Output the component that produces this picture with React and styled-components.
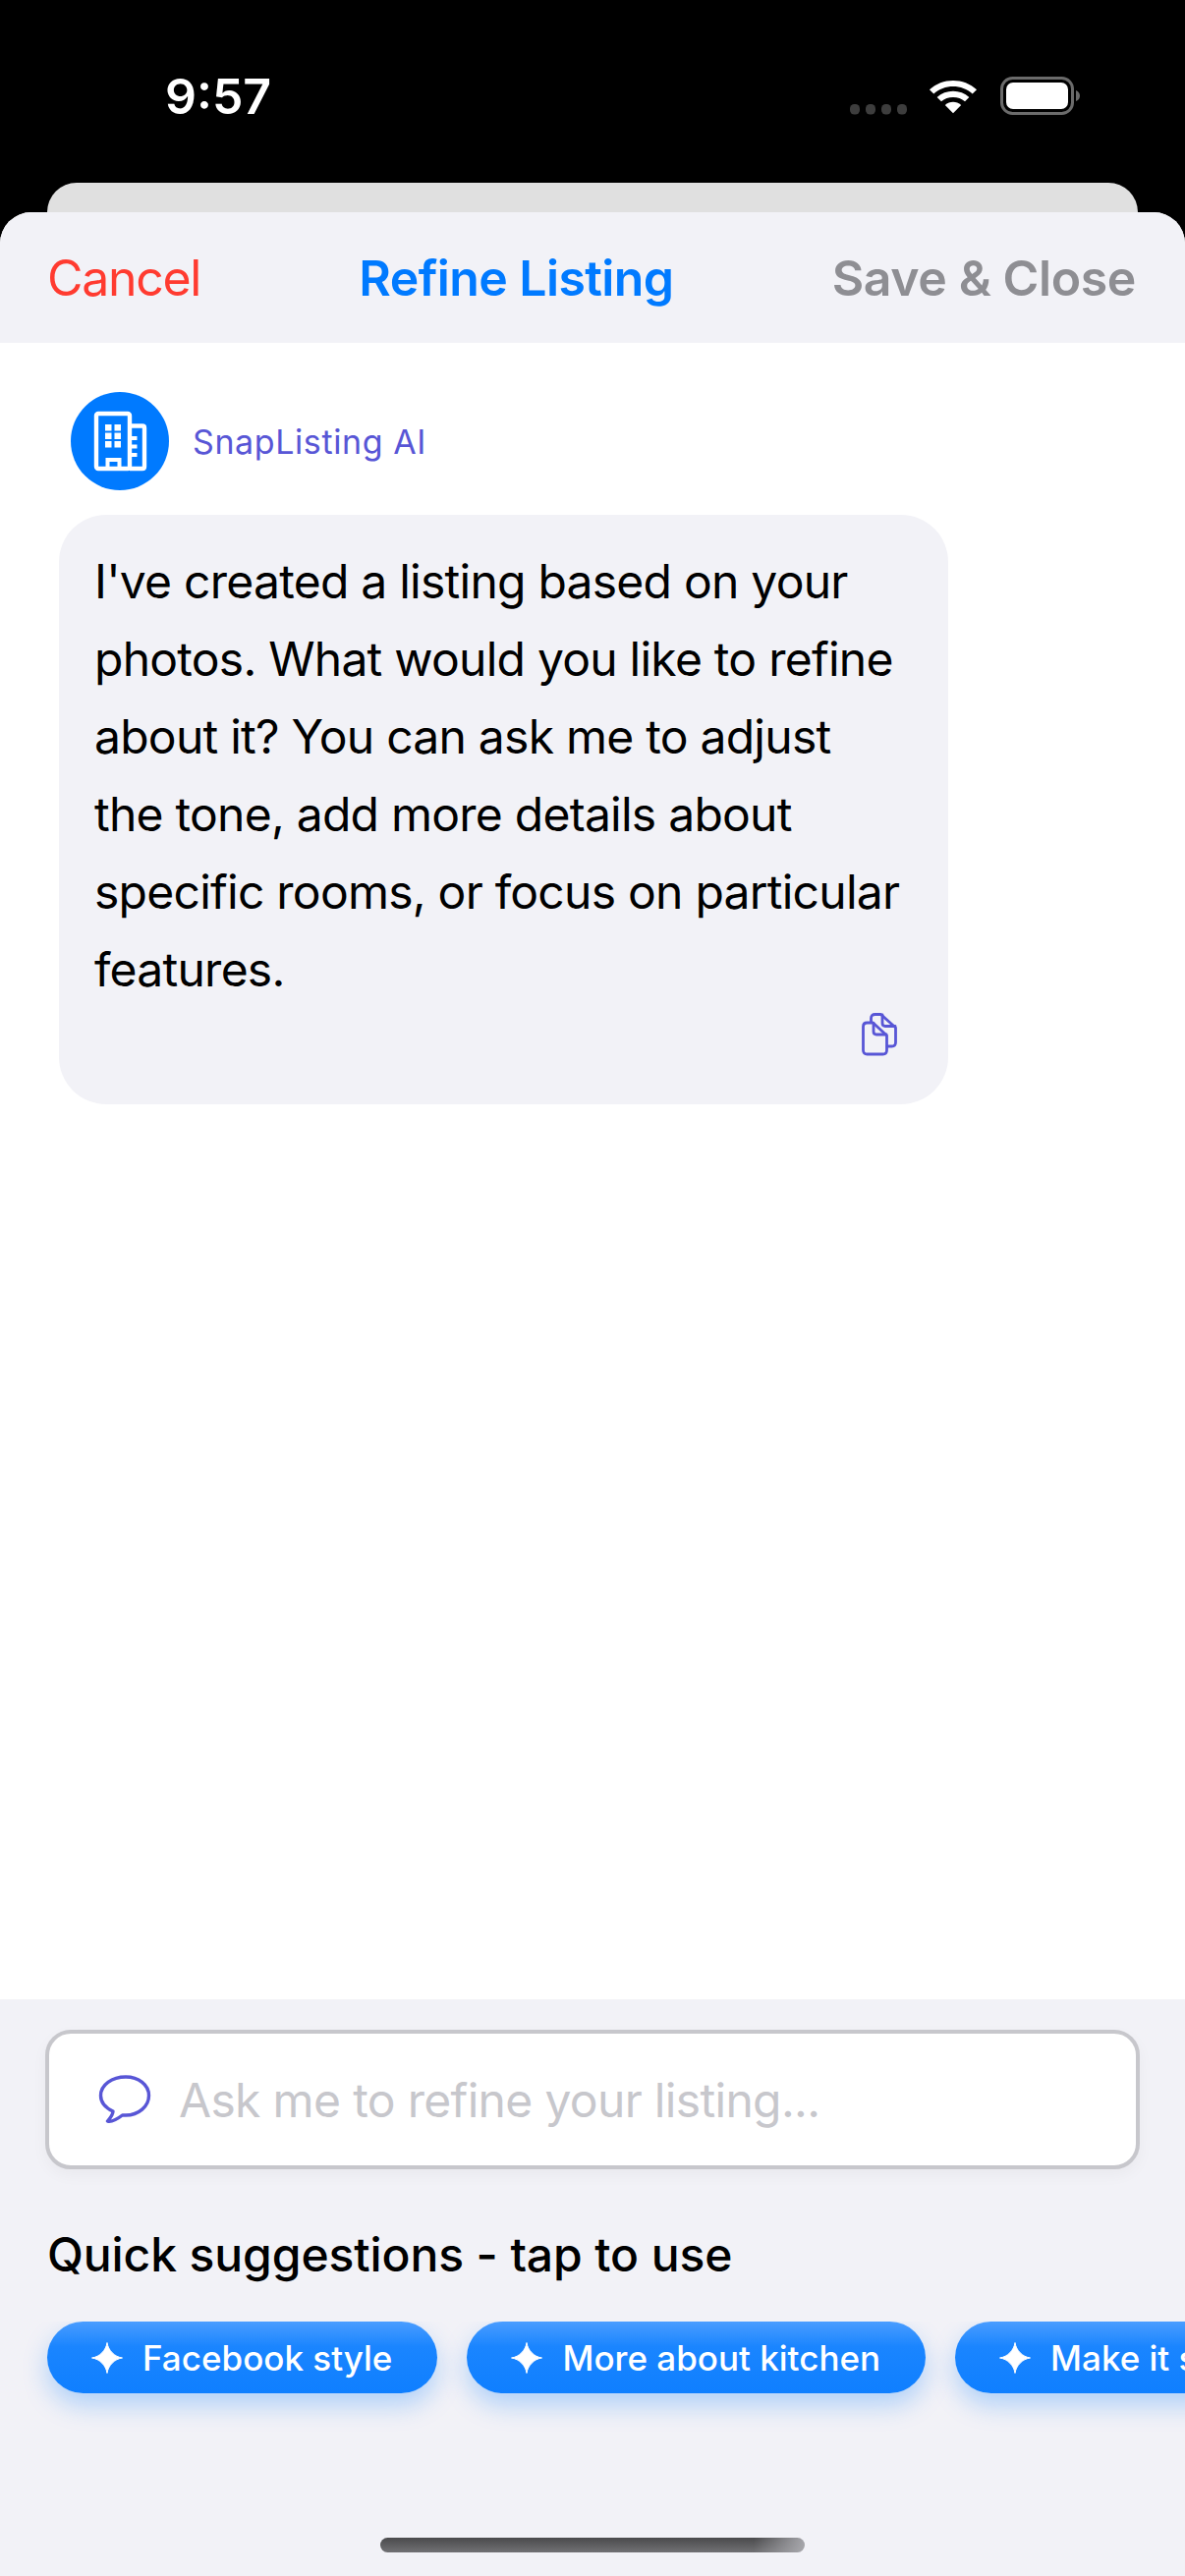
import React from "react";
import styled, { createGlobalStyle } from "styled-components";

const GlobalStyle = createGlobalStyle`
  html, body {
    margin: 0;
    padding: 0;
    background: #000;
  }
  * {
    box-sizing: border-box;
  }
`;

const Screen = styled.div`
  width: 1206px;
  height: 2622px;
  background: #000;
  display: flex;
  flex-direction: column;
  overflow: hidden;
  font-family: "Inter", "Liberation Sans", sans-serif;
`;

const StatusBar = styled.div`
  height: 186px;
  flex-shrink: 0;
  display: flex;
  justify-content: space-between;
  align-items: flex-start;
  padding: 68px 106px 0 168px;
`;

const Clock = styled.div`
  color: #fff;
  font-size: 50px;
  line-height: 60px;
  font-weight: 600;
  letter-spacing: 0;
`;

const StatusIcons = styled.div`
  display: flex;
  align-items: flex-start;
  margin-top: 10px;
`;

const BackSheet = styled.div`
  height: 30px;
  flex-shrink: 0;
  margin: 0 48px;
  background: #e0e0e0;
  border-radius: 30px 30px 0 0;
`;

const Sheet = styled.div`
  flex: 1;
  display: flex;
  flex-direction: column;
  background: #fff;
  border-radius: 32px 32px 0 0;
  overflow: hidden;
  min-height: 0;
`;

const Header = styled.div`
  height: 133px;
  flex-shrink: 0;
  background: #f2f2f7;
  display: flex;
  align-items: center;
  justify-content: space-between;
  padding: 0 50px 0 48px;
`;

const HeaderText = styled.div`
  font-size: 50px;
  line-height: 60px;
  font-weight: ${(p) => p.$weight || 600};
  color: ${(p) => p.$color};
  letter-spacing: ${(p) => p.$spacing || "0"};
`;

const Messages = styled.div`
  flex: 1;
  padding: 50px 0 0 60px;
  min-height: 0;
`;

const SenderRow = styled.div`
  display: flex;
  align-items: center;
  gap: 24px;
  padding-left: 12px;
`;

const Avatar = styled.div`
  width: 100px;
  height: 100px;
  border-radius: 50%;
  background: #007aff;
  display: flex;
`;

const SenderName = styled.div`
  font-size: 34px;
  color: #5856d6;
  letter-spacing: 0.6px;
`;

const Bubble = styled.div`
  width: 905px;
  height: 600px;
  margin-top: 25px;
  padding: 28px 36px 0;
  background: #f2f2f7;
  border-radius: 48px;
  display: flex;
  flex-direction: column;
`;

const BubbleText = styled.div`
  font-size: 48px;
  line-height: 79px;
  color: #000;
  white-space: pre;
  letter-spacing: -0.75px;
`;

const CopyRow = styled.div`
  display: flex;
  justify-content: flex-end;
  margin-top: 5px;
  margin-right: 16px;
`;

const BottomPanel = styled.div`
  height: 587px;
  flex-shrink: 0;
  background: #f2f2f7;
  padding: 31px 0 0 48px;
  display: flex;
  flex-direction: column;
  position: relative;
`;

const InputBox = styled.div`
  width: 1114px;
  height: 142px;
  margin-left: -2px;
  flex-shrink: 0;
  background: #fff;
  border: 4px solid #c7c7cc;
  border-radius: 26px;
  box-shadow: 0 6px 16px rgba(0, 0, 0, 0.04);
  display: flex;
  align-items: center;
  gap: 28px;
  padding-left: 50px;
`;

const Placeholder = styled.div`
  font-size: 48px;
  color: #c7c7cc;
  letter-spacing: -0.67px;
`;

const SuggestTitle = styled.div`
  margin-top: 58px;
  font-size: 48px;
  line-height: 58px;
  font-weight: 500;
  color: #000;
  letter-spacing: -0.1px;
`;

const ChipRow = styled.div`
  display: flex;
  gap: 30px;
  margin-top: 39px;
  margin-left: -48px;
  padding: 0 0 60px 48px;
  overflow: hidden;
`;

const Chip = styled.div`
  height: 73px;
  flex-shrink: 0;
  display: flex;
  align-items: center;
  gap: 20px;
  padding: 0 46px 0 45px;
  border-radius: 37px;
  color: #fff;
  font-size: 35px;
  font-weight: 500;
  letter-spacing: 0;
  white-space: nowrap;
  background: linear-gradient(180deg, #4a9dff 0%, #1a85ff 35%, #0f7fff 100%);
  box-shadow: 0 12px 26px rgba(0, 122, 255, 0.28);
`;

const HomeIndicator = styled.div`
  position: absolute;
  left: 387px;
  bottom: 24px;
  width: 432px;
  height: 15px;
  border-radius: 8px;
  background: linear-gradient(90deg, rgba(175, 175, 180, 0) 88%, rgba(175, 175, 180, 0.9) 100%),
    linear-gradient(180deg, #4a4a4c 0%, #717174 100%);
`;

const CellularDots = () => (
  <svg width="58" height="11" viewBox="0 0 58 11" style={{ marginTop: 28, marginRight: 22 }}>
    {[0, 16, 32, 48].map((x) => (
      <rect key={x} x={x} y="0" width="10" height="10.5" rx="4.5" fill="#3d3d3d" />
    ))}
  </svg>
);

const WifiIcon = () => (
  <svg width="50" height="37" viewBox="0 0 52 38" style={{ marginTop: 1, marginRight: 23 }}>
    <path d="M1 12.5C14.5 -0.5 37.5 -0.5 51 12.5L46.5 17C35.5 6.5 16.5 6.5 5.5 17Z" fill="#fff" />
    <path d="M9 20.5C18 12 34 12 43 20.5L38.5 25C32 19 20 19 13.5 25Z" fill="#fff" />
    <path d="M17.5 29C22.5 24.5 29.5 24.5 34.5 29L26 37.5Z" fill="#fff" />
  </svg>
);

const BatteryIcon = () => (
  <svg width="82" height="39" viewBox="0 0 82 39">
    <rect x="1.5" y="1.5" width="72" height="36" rx="11" fill="none" stroke="#6b6b6b" strokeWidth="3" />
    <rect x="6" y="6" width="63" height="27" rx="7" fill="#fff" />
    <path d="M77 14C80 15 81 17.5 81 19.5C81 21.5 80 24 77 25Z" fill="#6b6b6b" />
  </svg>
);

const BuildingIcon = () => (
  <svg width="100" height="100" viewBox="0 0 100 100">
    <rect x="26" y="22" width="34" height="56" rx="2" fill="none" stroke="#fff" strokeWidth="4.4" />
    <path d="M62 34.5H73C74.2 34.5 75 35.3 75 36.5V76C75 77.3 74.2 78 73 78H60" fill="none" stroke="#fff" strokeWidth="4.4" />
    {[33, 41.5, 50].map((y) => (
      <g key={y}>
        <rect x="35" y={y} width="6.5" height="6.5" fill="#fff" />
        <rect x="44.5" y={y} width="6.5" height="6.5" fill="#fff" />
      </g>
    ))}
    <path d="M37.5 78V69H49.5V78" fill="none" stroke="#fff" strokeWidth="4" />
    {[45, 53.5, 62].map((y) => (
      <rect key={y} x="62" y={y} width="5.5" height="4" fill="#fff" />
    ))}
  </svg>
);

const CopyIcon = () => (
  <svg width="36" height="44" viewBox="0 0 36 44" fill="none" stroke="#5856d6" strokeWidth="2.8" strokeLinejoin="round" strokeLinecap="round">
    <path d="M9.5 9V5.5C9.5 3 11 1.5 13.5 1.5H19.5L34.5 15V30C34.5 32.5 33 34 30.5 34H26" />
    <path d="M21 2V10.5C21 12.5 22 13.5 24 13.5H34" />
    <path d="M5.5 10H11.5L25.5 23V38C25.5 40.5 24 42 21.5 42H5.5C3 42 1.5 40.5 1.5 38V14C1.5 11.5 3 10 5.5 10Z" />
    <path d="M12 10.5V19C12 21 13 22 15 22H25" />
  </svg>
);

const ChatIcon = () => (
  <svg width="54" height="50" viewBox="0 0 54 50" fill="none" stroke="#5856d6" strokeWidth="3.4" strokeLinejoin="round">
    <path d="M28 2C14 2 2.5 10 2.5 21C2.5 28.5 7.5 33.5 15 37C15 40 13 43 9.5 47C14 48 20 44.5 24.5 41C25.5 41 26.5 41 28 41C41 41 51.5 32 51.5 21C51.5 10 41 2 28 2Z" />
  </svg>
);

const SparkleIcon = () => (
  <svg width="32" height="32" viewBox="0 0 32 32">
    <path d="M16 0.5C17 8 23.5 15 31.5 16C23.5 17 17 24 16 31.5C15 24 8.5 17 0.5 16C8.5 15 15 8 16 0.5Z" fill="#fff" stroke="#fff" strokeWidth="1" strokeLinejoin="round" />
  </svg>
);

const suggestions = ["Facebook style", "More about kitchen", "Make it shorter"];

export default function App() {
  return (
    <>
      <GlobalStyle />
      <Screen>
        <StatusBar>
          <Clock>9:57</Clock>
          <StatusIcons>
            <CellularDots />
            <WifiIcon />
            <BatteryIcon />
          </StatusIcons>
        </StatusBar>
        <BackSheet />
        <Sheet>
          <Header>
            <HeaderText $color="#ff3b30" $weight={400} $spacing="-1.3px">Cancel</HeaderText>
            <HeaderText $color="#007aff" $spacing="-0.6px">Refine Listing</HeaderText>
            <HeaderText $color="#8e8e93" $spacing="-0.4px">Save &amp; Close</HeaderText>
          </Header>
          <Messages>
            <SenderRow>
              <Avatar>
                <BuildingIcon />
              </Avatar>
              <SenderName>SnapListing AI</SenderName>
            </SenderRow>
            <Bubble>
              <BubbleText>
                {"I've created a listing based on your\nphotos. What would you like to refine\nabout it? You can ask me to adjust\nthe tone, add more details about\nspecific rooms, or focus on particular\nfeatures."}
              </BubbleText>
              <CopyRow>
                <CopyIcon />
              </CopyRow>
            </Bubble>
          </Messages>
          <BottomPanel>
            <InputBox>
              <ChatIcon />
              <Placeholder>Ask me to refine your listing...</Placeholder>
            </InputBox>
            <SuggestTitle>Quick suggestions - tap to use</SuggestTitle>
            <ChipRow>
              {suggestions.map((s) => (
                <Chip key={s}>
                  <SparkleIcon />
                  {s}
                </Chip>
              ))}
            </ChipRow>
            <HomeIndicator />
          </BottomPanel>
        </Sheet>
      </Screen>
    </>
  );
}
